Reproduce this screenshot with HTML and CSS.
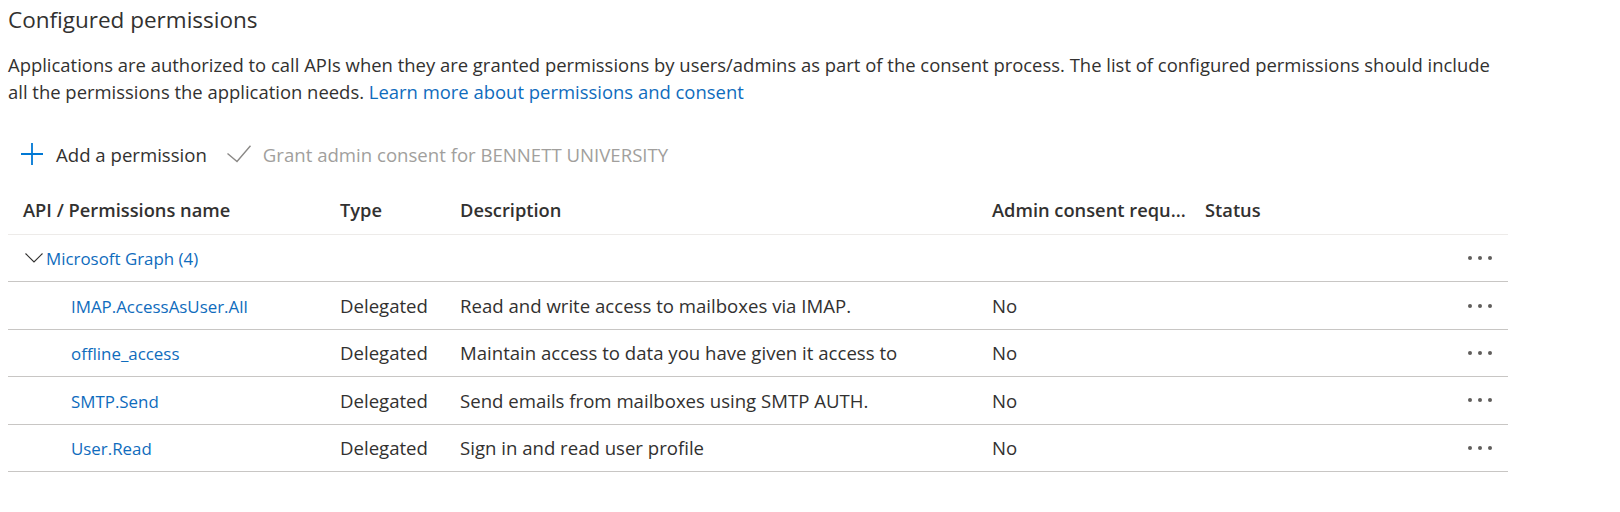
FILE: index.html
```html
<!DOCTYPE html>
<html lang="en">
<head>
<meta charset="utf-8">
<title>Configured permissions</title>
<link rel="stylesheet" href="styles.css">
</head>
<body>
<main class="page">
  <h2 class="title">Configured permissions</h2>
  <p class="intro">Applications are authorized to call APIs when they are granted permissions by users/admins as part of the consent process. The list of configured permissions should include all the permissions the application needs. <a href="#" class="link">Learn more about permissions and consent</a></p>

  <div class="toolbar">
    <button class="tool">
      <svg class="ico" viewBox="0 0 22 22" width="22" height="22"><path d="M11 0v22M0 11h22" stroke="#0078d4" stroke-width="1.8" fill="none"/></svg>
      <span>Add a permission</span>
    </button>
    <button class="tool disabled">
      <svg class="ico" viewBox="0 0 24 18" width="24" height="18"><path d="M0.5 8.5l9.5 8L23.5 0.8" stroke="#8a8886" stroke-width="1.4" fill="none"/></svg>
      <span>Grant admin consent for BENNETT UNIVERSITY</span>
    </button>
  </div>

  <div class="grid">
    <div class="row head">
      <div class="c1">API / Permissions name</div>
      <div>Type</div>
      <div>Description</div>
      <div>Admin consent requ...</div>
      <div>Status</div>
      <div></div>
    </div>
    <div class="row group">
      <div class="c1 grp"><svg class="chev" viewBox="0 0 18 10" width="18" height="10"><path d="M0.5 0.5l8.5 8.5 8.5-8.5" stroke="#323130" stroke-width="1.1" fill="none"/></svg><a href="#" class="link tlink">Microsoft Graph (4)</a></div>
      <div></div><div></div><div></div><div></div>
      <div class="more"><span></span><span></span><span></span></div>
    </div>
    <div class="row">
      <div class="c1 perm"><a href="#" class="link tlink">IMAP.AccessAsUser.All</a></div>
      <div>Delegated</div>
      <div>Read and write access to mailboxes via IMAP.</div>
      <div>No</div>
      <div></div>
      <div class="more"><span></span><span></span><span></span></div>
    </div>
    <div class="row">
      <div class="c1 perm"><a href="#" class="link tlink">offline_access</a></div>
      <div>Delegated</div>
      <div>Maintain access to data you have given it access to</div>
      <div>No</div>
      <div></div>
      <div class="more"><span></span><span></span><span></span></div>
    </div>
    <div class="row">
      <div class="c1 perm"><a href="#" class="link tlink">SMTP.Send</a></div>
      <div>Delegated</div>
      <div>Send emails from mailboxes using SMTP AUTH.</div>
      <div>No</div>
      <div></div>
      <div class="more"><span></span><span></span><span></span></div>
    </div>
    <div class="row">
      <div class="c1 perm"><a href="#" class="link tlink">User.Read</a></div>
      <div>Delegated</div>
      <div>Sign in and read user profile</div>
      <div>No</div>
      <div></div>
      <div class="more"><span></span><span></span><span></span></div>
    </div>
  </div>
</main>
</body>
</html>
```

FILE: styles.css
```css
* { box-sizing: border-box; }
html, body { margin: 0; background: #fff; }
body {
  font-family: "Open Sans", "Noto Sans", sans-serif;
  color: #323130;
  font-size: 18.6px;
}
.page { padding: 4px 0 0 8px; }
.title {
  margin: 0;
  font-size: 22.5px;
  font-weight: 400;
  line-height: 32px;
}
.intro {
  margin: 15px 0 0;
  width: 1500px;
  font-size: 18.45px;
  line-height: 27px;
}
.link { color: #0f6cbd; text-decoration: none; }
.tlink { font-size: 16.9px; }
.toolbar {
  display: flex;
  gap: 20px;
  margin-top: 33px;
  padding-left: 13px;
  height: 32px;
  align-items: center;
}
.tool {
  display: flex;
  align-items: center;
  gap: 13px;
  border: 0;
  background: none;
  padding: 0;
  font: inherit;
  color: #323130;
}
.tool.disabled { color: #a19f9d; gap: 12px; }
.ico { display: block; }
.grid { width: 1500px; margin-top: 16px; }
.row {
  display: grid;
  grid-template-columns: 332px 120px 532px 213px 1fr 48px;
  align-items: center;
  height: 47.4px;
  border-bottom: 1px solid #c8c6c4;
}
.row.head {
  height: 49px;
  padding-bottom: 2px;
  font-weight: 600;
  font-size: 18.3px;
  border-bottom-color: #edebe9;
}
.c1 { padding-left: 15px; }
.grp { display: flex; align-items: center; gap: 3px; padding-left: 17px; }
.chev { display: block; }
.perm { padding-left: 63px; }
.more {
  display: flex;
  gap: 6px;
  justify-content: flex-start;
  padding-left: 8px;
}
.more span {
  width: 4px; height: 4px; border-radius: 50%;
  background: #605e5c;
}
```
